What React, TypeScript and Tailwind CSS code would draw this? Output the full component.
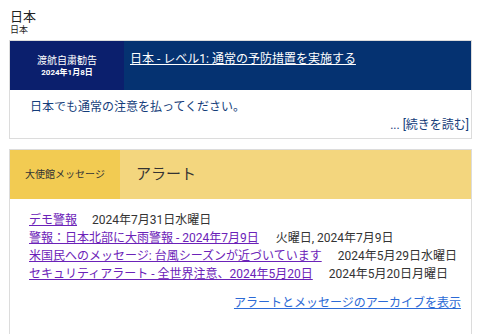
const font = { fontFamily: "Roboto, 'Noto Sans CJK JP', sans-serif" };

const alerts = [
  { title: "デモ警報", date: "2024年7月31日水曜日", gap: "ml-[15px]" },
  { title: "警報：日本北部に大雨警報 - 2024年7月9日", date: "火曜日, 2024年7月9日", gap: "ml-[17px]" },
  { title: "米国民へのメッセージ: 台風シーズンが近づいています", date: "2024年5月29日水曜日", gap: "ml-[16px]" },
  { title: "セキュリティアラート - 全世界注意、2024年5月20日", date: "2024年5月20日月曜日", gap: "ml-[16px]" },
];

export default function App() {
  return (
    <div
      className="w-[480px] h-[334px] overflow-hidden bg-white px-[9px] pt-[9px] text-[#222]"
      style={font}
    >
      <div className="pl-[1px] text-[13px] leading-[16px]">日本</div>
      <div className="pl-[1px] text-[9px] leading-[10px]">日本</div>

      <div className="mt-[5px] w-[463px] border border-[#dcdcdc]">
        <div className="flex h-[49px]">
          <div className="flex w-[114px] flex-col items-center justify-center bg-[#0b1f6d] text-white">
            <span className="text-[10px] leading-[13px]">渡航自粛勧告</span>
            <span className="text-[8px] font-bold leading-[11px]">2024年1月8日</span>
          </div>
          <div className="flex-1 bg-[#053271] pl-[6px] pt-[5px]">
            <a href="#" className="text-[12px] leading-[16px] text-white underline">
              日本 - レベル1: 通常の予防措置を実施する
            </a>
          </div>
        </div>
        <div className="pb-[6px] pl-[20px] pr-[2px] pt-[9px] text-[#143d7a]">
          <p className="text-[12px] leading-[16px]">日本でも通常の注意を払ってください。</p>
          <p className="mt-[3px] text-right text-[12px] leading-[14px]">... [続きを読む]</p>
        </div>
      </div>

      <div className="mt-[10px] h-[200px] w-[463px] border border-[#dcdcdc]">
        <div className="flex h-[49px]">
          <div className="flex w-[110px] items-center justify-center bg-[#f2cb52] text-[10px] text-[#333]">
            大使館メッセージ
          </div>
          <div className="flex flex-1 items-center bg-[#f3d67e] pl-[16px] text-[15px] text-[#333]">
            アラート
          </div>
        </div>
        <div className="pl-[19px] pr-[10px] pt-[13px]">
          <ul className="flex flex-col gap-[1px]">
            {alerts.map((a) => (
              <li key={a.title} className="flex items-center text-[12px] leading-[17px]">
                <a href="#" className="text-[#6b22b8] underline">
                  {a.title}
                </a>
                <span className={`${a.gap} text-[#333]`}>{a.date}</span>
              </li>
            ))}
          </ul>
          <div className="mt-[12px] text-right text-[12px] leading-[16px]">
            <a href="#" className="text-[#2c6ad6] underline">
              アラートとメッセージのアーカイブを表示
            </a>
          </div>
        </div>
      </div>
    </div>
  );
}
